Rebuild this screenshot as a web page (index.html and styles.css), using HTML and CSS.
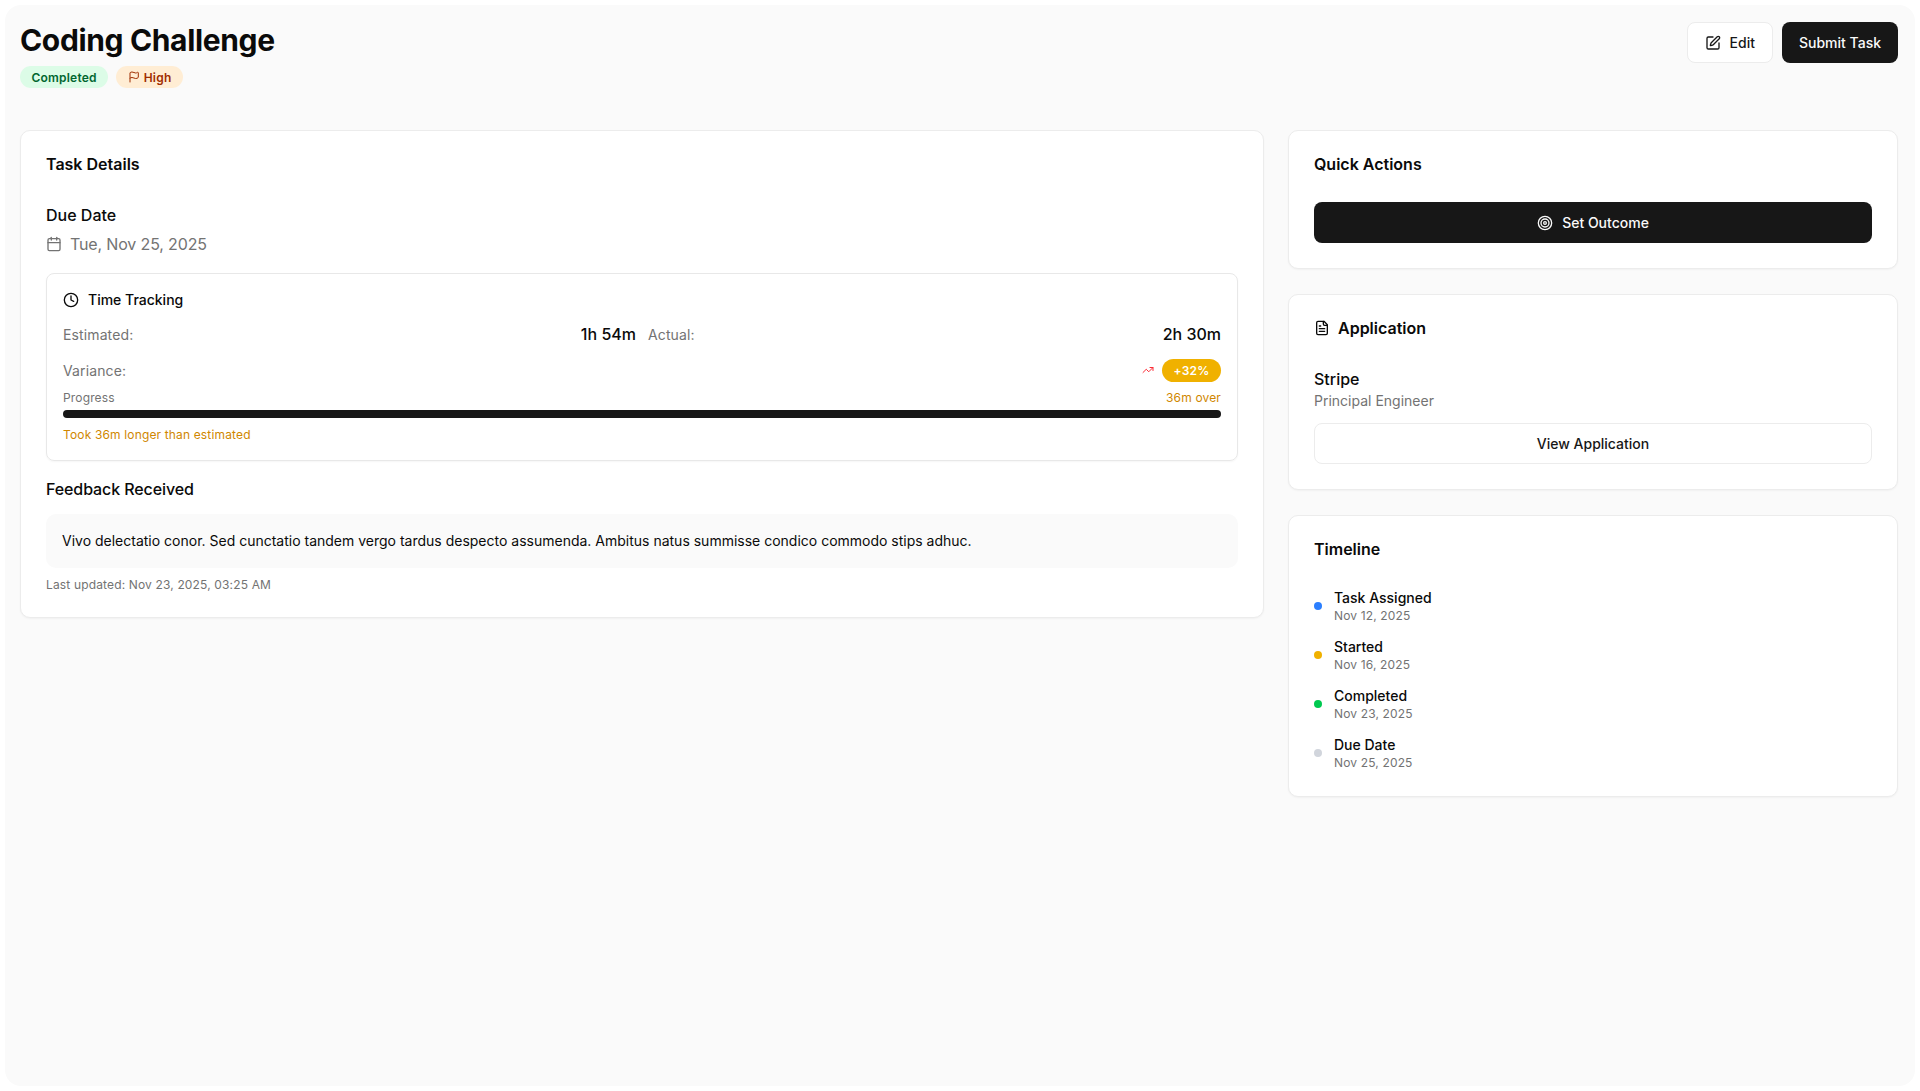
FILE: index.html
```html
<!DOCTYPE html>
<html lang="en">
<head>
    <meta charset="UTF-8">
    <title>Coding Challenge</title>
    <link rel="stylesheet" href="styles.css">
</head>
<body>
    <div class="panel">
        <header class="page-header">
            <div>
                <h1>Coding Challenge</h1>
                <div class="badges">
                    <span class="badge badge-green">Completed</span>
                    <span class="badge badge-orange">
                        <svg class="icon-12" viewBox="0 0 24 24"><path d="M4 22V4a1 1 0 0 1 .4-.8A6 6 0 0 1 8 2c3 0 5 2 7.33 2q2 0 3.67-1.33a1 1 0 0 1 1.6.8v9.06a1 1 0 0 1-.4.8c-1.33 1-2.6 1.67-4.87 1.67-2.33 0-4.33-2-7.33-2q-2.5 0-4 1.33"/></svg>
                        High
                    </span>
                </div>
            </div>
            <div class="header-actions">
                <button class="button button-light">
                    <svg class="icon-16" viewBox="0 0 24 24"><path d="M12 3H5a2 2 0 0 0-2 2v14a2 2 0 0 0 2 2h14a2 2 0 0 0 2-2v-7"/><path d="M18.38 2.62a2.12 2.12 0 1 1 3 3L12.36 14.64a2 2 0 0 1-.85.5l-2.87.84a.5.5 0 0 1-.62-.62l.84-2.87a2 2 0 0 1 .5-.85z"/></svg>
                    Edit
                </button>
                <button class="button button-dark">Submit Task</button>
            </div>
        </header>

        <main class="columns">
            <section class="card card-main">
                <h2 class="card-title">Task Details</h2>
                <h3 class="sub-title due-title">Due Date</h3>
                <div class="due-date">
                    <svg class="icon-16" viewBox="0 0 24 24"><path d="M8 2v4"/><path d="M16 2v4"/><rect x="3" y="4" width="18" height="18" rx="2"/><path d="M3 10h18"/></svg>
                    Tue, Nov 25, 2025
                </div>

                <div class="tracking">
                    <div class="tracking-title">
                        <svg class="icon-16" viewBox="0 0 24 24"><circle cx="12" cy="12" r="10"/><path d="M12 6v6l4 2"/></svg>
                        Time Tracking
                    </div>
                    <div class="tracking-grid">
                        <div class="stat"><span class="stat-label">Estimated:</span><span class="stat-value">1h 54m</span></div>
                        <div class="stat"><span class="stat-label">Actual:</span><span class="stat-value">2h 30m</span></div>
                    </div>
                    <div class="stat variance">
                        <span class="stat-label">Variance:</span>
                        <span class="variance-right">
                            <svg class="icon-12 icon-red" viewBox="0 0 24 24"><path d="M16 7h6v6"/><path d="m22 7-8.5 8.5-5-5L2 17"/></svg>
                            <span class="pill">+32%</span>
                        </span>
                    </div>
                    <div class="progress-labels"><span>Progress</span><span class="amber">36m over</span></div>
                    <div class="progress-bar"></div>
                    <p class="took amber">Took 36m longer than estimated</p>
                </div>

                <h3 class="sub-title feedback-title">Feedback Received</h3>
                <div class="feedback">Vivo delectatio conor. Sed cunctatio tandem vergo tardus despecto assumenda. Ambitus natus summisse condico commodo stips adhuc.</div>
                <p class="updated">Last updated: Nov 23, 2025, 03:25 AM</p>
            </section>

            <aside class="side">
                <section class="card">
                    <h2 class="card-title">Quick Actions</h2>
                    <button class="button button-dark button-wide action-button">
                        <svg class="icon-16" viewBox="0 0 24 24"><circle cx="12" cy="12" r="10"/><circle cx="12" cy="12" r="6"/><circle cx="12" cy="12" r="2"/></svg>
                        Set Outcome
                    </button>
                </section>

                <section class="card">
                    <h2 class="card-title with-icon">
                        <svg class="icon-16" viewBox="0 0 24 24"><path d="M15 2H6a2 2 0 0 0-2 2v16a2 2 0 0 0 2 2h12a2 2 0 0 0 2-2V7z"/><path d="M14 2v4a2 2 0 0 0 2 2h4"/><path d="M10 9H8"/><path d="M16 13H8"/><path d="M16 17H8"/></svg>
                        Application
                    </h2>
                    <div class="company">Stripe</div>
                    <div class="role">Principal Engineer</div>
                    <button class="button button-light button-wide">View Application</button>
                </section>

                <section class="card">
                    <h2 class="card-title">Timeline</h2>
                    <ul class="timeline">
                        <li><span class="dot dot-blue"></span><div><div class="event">Task Assigned</div><div class="event-date">Nov 12, 2025</div></div></li>
                        <li><span class="dot dot-amber"></span><div><div class="event">Started</div><div class="event-date">Nov 16, 2025</div></div></li>
                        <li><span class="dot dot-green"></span><div><div class="event">Completed</div><div class="event-date">Nov 23, 2025</div></div></li>
                        <li><span class="dot dot-gray"></span><div><div class="event">Due Date</div><div class="event-date">Nov 25, 2025</div></div></li>
                    </ul>
                </section>
            </aside>
        </main>
    </div>
</body>
</html>
```

FILE: styles.css
```css
* {
    margin: 0;
    padding: 0;
    box-sizing: border-box;
}

body {
    background-color: #ffffff;
    color: #0a0a0a;
    font-family: Inter, 'Liberation Sans', sans-serif;
    height: 100vh;
    padding: 5px;
    overflow: hidden;
}

svg {
    fill: none;
    stroke: currentColor;
    stroke-width: 2;
    stroke-linecap: round;
    stroke-linejoin: round;
    flex-shrink: 0;
}

.icon-12 {
    width: 12px;
    height: 12px;
}

.icon-16 {
    width: 16px;
    height: 16px;
}

.icon-red {
    color: #fb2c36;
}

.panel {
    height: 100%;
    background-color: #fafafa;
    border-radius: 16px;
    padding: 17px 17px 0 15px;
}

.page-header {
    display: flex;
    justify-content: space-between;
    align-items: flex-start;
    height: 108px;
}

h1 {
    font-size: 30px;
    line-height: 36px;
    font-weight: 700;
    letter-spacing: -0.35px;
}

.badges {
    display: flex;
    gap: 8px;
    margin-top: 8px;
}

.badge {
    display: inline-flex;
    align-items: center;
    gap: 4px;
    height: 22px;
    padding: 0 11.5px;
    border-radius: 11px;
    font-size: 12px;
    font-weight: 600;
    letter-spacing: 0.2px;
}

.badge-green {
    background-color: #dcfce7;
    color: #016630;
}

.badge-orange {
    background-color: #ffedd4;
    color: #9f2d00;
}

.header-actions {
    display: flex;
    gap: 9px;
}

.button {
    display: flex;
    align-items: center;
    justify-content: center;
    gap: 9px;
    height: 41px;
    padding: 0 17px;
    border-radius: 8px;
    font-family: inherit;
    font-size: 14px;
    font-weight: 500;
}

.button-light {
    background-color: #ffffff;
    border: 1px solid #ececec;
    color: #171717;
}

.button-dark {
    background-color: #171717;
    border: none;
    color: #fafafa;
}

.button-wide {
    width: 100%;
}

.columns {
    display: grid;
    grid-template-columns: 1244px 610px;
    gap: 24px;
    align-items: start;
}

.side {
    display: flex;
    flex-direction: column;
    gap: 25px;
}

.card {
    background-color: #ffffff;
    border: 1px solid #ececec;
    border-radius: 10px;
    box-shadow: 0 1px 2px rgba(0, 0, 0, 0.04);
    padding: 21px 25px 25px;
}

.card-main {
    padding-bottom: 24px;
}

.card-title {
    font-size: 16px;
    line-height: 24px;
    font-weight: 600;
}

.with-icon {
    display: flex;
    align-items: center;
    gap: 8px;
}

.sub-title {
    font-size: 16px;
    line-height: 24px;
    font-weight: 500;
}

.due-title {
    margin-top: 27px;
}

.due-date {
    display: flex;
    align-items: center;
    gap: 8px;
    margin-top: 5px;
    font-size: 16px;
    line-height: 24px;
    letter-spacing: -0.15px;
    color: #737373;
}

.tracking {
    margin-top: 17px;
    border: 1px solid #e8e8e8;
    border-radius: 8px;
    box-shadow: 0 1px 2px rgba(0, 0, 0, 0.04);
    padding: 16px 16px 17px;
}

.tracking-title {
    display: flex;
    align-items: center;
    gap: 9px;
    font-size: 14px;
    line-height: 20px;
    font-weight: 500;
}

.tracking-grid {
    display: grid;
    grid-template-columns: 1fr 1fr;
    gap: 12px;
    margin-top: 12px;
}

.stat {
    display: flex;
    justify-content: space-between;
    align-items: center;
    height: 24px;
}

.stat-label {
    font-size: 14px;
    letter-spacing: 0.12px;
    color: #737373;
}

.stat-value {
    font-size: 16px;
    font-weight: 500;
}

.variance {
    margin-top: 12px;
}

.variance-right {
    display: flex;
    align-items: center;
    gap: 8px;
}

.pill {
    display: flex;
    align-items: center;
    height: 23px;
    padding: 0 11.5px;
    border-radius: 12px;
    background-color: #f0b100;
    color: #ffffff;
    font-size: 12px;
    font-weight: 600;
    letter-spacing: 0.2px;
}

.progress-labels {
    display: flex;
    justify-content: space-between;
    margin-top: 8px;
    font-size: 12px;
    line-height: 16px;
    letter-spacing: 0.15px;
    color: #737373;
}

.amber {
    color: #d08700;
}

.progress-bar {
    height: 8px;
    margin-top: 4px;
    background-color: #171717;
    border-radius: 4px;
}

.took {
    margin-top: 9px;
    font-size: 12px;
    line-height: 16px;
    letter-spacing: 0.15px;
}

.feedback-title {
    margin-top: 16px;
    letter-spacing: -0.1px;
}

.feedback {
    margin-top: 13px;
    padding: 17px 16px;
    background-color: #fafafa;
    border-radius: 10px;
    font-size: 14px;
    line-height: 20px;
}

.updated {
    margin-top: 9px;
    font-size: 12px;
    line-height: 16px;
    letter-spacing: 0.15px;
    color: #737373;
}

.action-button {
    margin-top: 26px;
}

.company {
    margin-top: 27px;
    font-size: 16px;
    line-height: 24px;
    font-weight: 500;
}

.role {
    font-size: 14px;
    line-height: 20px;
    color: #737373;
}

.card .button-light {
    margin-top: 12px;
}

.timeline {
    list-style: none;
    margin-top: 27px;
    display: flex;
    flex-direction: column;
    gap: 13px;
}

.timeline li {
    display: flex;
    align-items: center;
    gap: 12px;
}

.dot {
    width: 8px;
    height: 8px;
    border-radius: 50%;
}

.dot-blue {
    background-color: #2b7fff;
}

.dot-amber {
    background-color: #f0b100;
}

.dot-green {
    background-color: #00c950;
}

.dot-gray {
    background-color: #d1d5dc;
}

.event {
    font-size: 14px;
    line-height: 20px;
    font-weight: 500;
}

.event-date {
    font-size: 12px;
    line-height: 16px;
    letter-spacing: 0.15px;
    color: #737373;
}
```
